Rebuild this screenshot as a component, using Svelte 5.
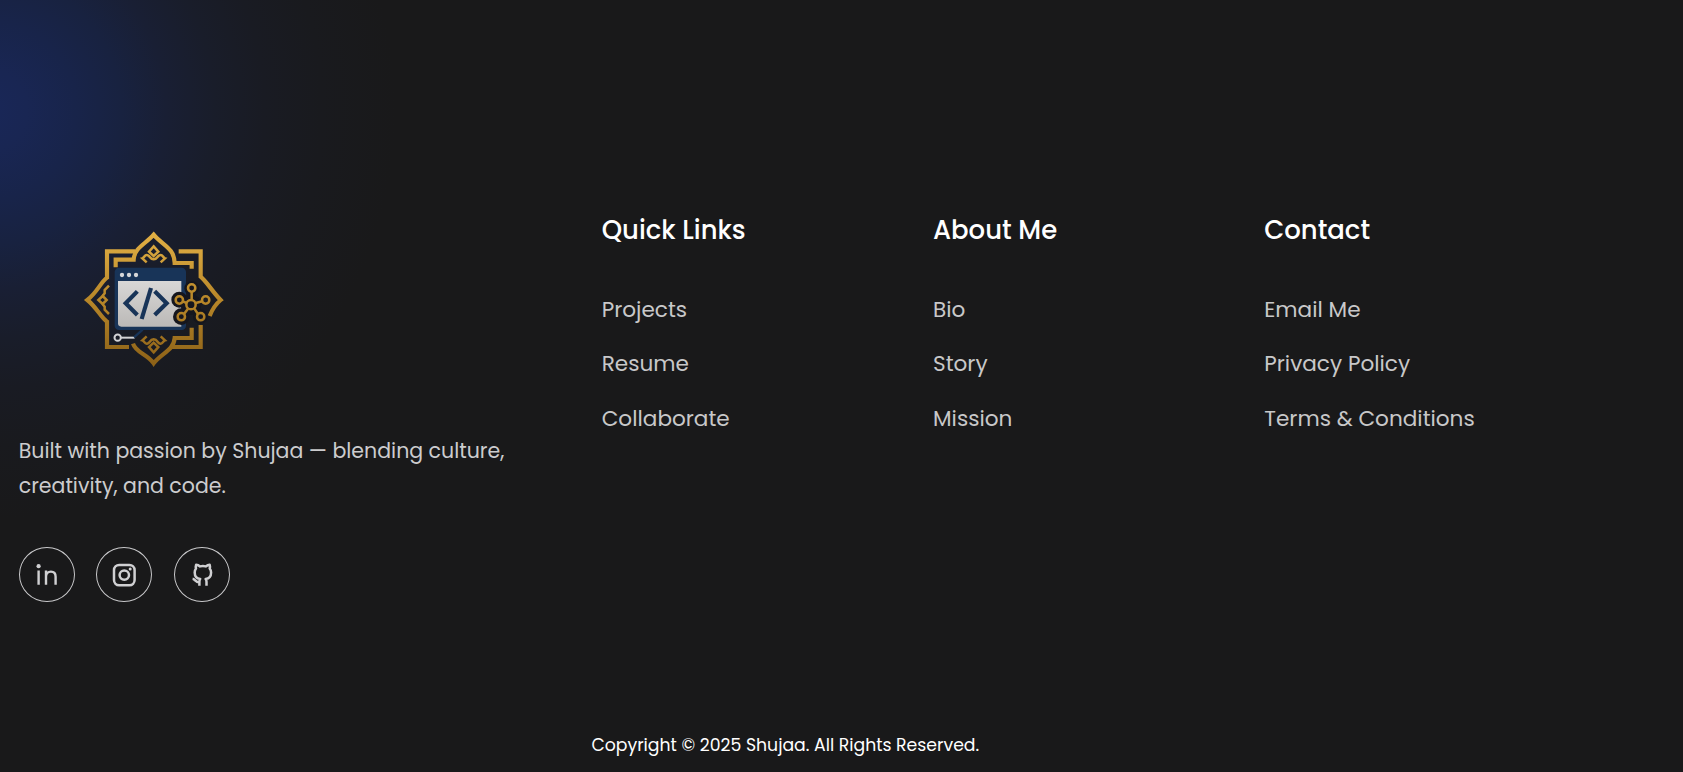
<script>
  const columns = [
    { title: 'Quick Links', links: ['Projects', 'Resume', 'Collaborate'] },
    { title: 'About Me', links: ['Bio', 'Story', 'Mission'] },
    { title: 'Contact', links: ['Email Me', 'Privacy Policy', 'Terms & Conditions'] }
  ];
</script>

<footer class="page">
  <div class="main">
    <section class="brand">
      <svg class="logo" viewBox="0 0 480 480" aria-hidden="true">
        <defs>
          <linearGradient id="gold" gradientUnits="userSpaceOnUse" x1="0" y1="35" x2="0" y2="440">
            <stop offset="0" stop-color="#e2b045" />
            <stop offset="0.5" stop-color="#b88729" />
            <stop offset="1" stop-color="#8b6017" />
          </linearGradient>
          <linearGradient id="paper" x1="0" y1="0" x2="0" y2="1">
            <stop offset="0" stop-color="#d8d7d6" />
            <stop offset="1" stop-color="#bbb9b7" />
          </linearGradient>
        </defs>
        <g fill="none" stroke="url(#gold)" stroke-width="12.5" stroke-linejoin="miter">
          <path d="M122 142 V119 H176 C178 83 211 73 236 44 C261 75 298 83 299 129 H350 V146" />
          <path d="M180 94 H96 V173 C77 187 66 218 37 240 C65 262 77 292 96 305 V381 H162" />
          <path d="M311 94 H377 V170 C397 187 412 215 437 240 C420 254 411 270 404 288" />
          <path d="M377 315 V381 H291" />
          <path d="M174 371 C183 399 216 401 236 430 C259 399 296 392 299 354 H350 V323" />
        </g>
        <g fill="none" stroke="url(#gold)" stroke-width="7.5">
          <path d="M236 79 L250 95 L236 108 L222 95 Z" />
          <path d="M215 127 L202 115 C209 113 208 104 216 105 C226 106 223 117 236 118 C249 117 246 106 256 105 C264 104 263 113 270 115 L257 127" />
          <path d="M236 397 L250 381 L236 368 L222 381 Z" />
          <path d="M215 349 L202 361 C209 363 208 372 216 371 C226 370 223 359 236 358 C249 359 246 370 256 371 C264 372 263 363 270 361 L257 349" />
          <path d="M83 228 L95 240 L83 252 L70 240 Z" />
          <path d="M102 197 L89 210 V220 L82 229 M102 282 L89 269 V260 L82 251" />
        </g>
        <rect x="119" y="143" width="214" height="187" rx="13" fill="#183458" />
        <path d="M129 183 H319 V320 H139 Q129 320 129 310 Z" fill="url(#paper)" />
        <g fill="#d6d7d9">
          <circle cx="141" cy="165" r="6.5" />
          <circle cx="162" cy="165" r="6.5" />
          <circle cx="183" cy="165" r="6.5" />
        </g>
        <g fill="none" stroke="#183458" stroke-width="12.5">
          <path d="M187 214 L152 250 L187 285" />
          <path d="M239 214 L275 250 L239 285" />
          <path d="M228 204 L200 297" />
        </g>
        <g fill="#15161d">
          <circle cx="313" cy="239" r="24" />
          <circle cx="319" cy="290" r="25" />
          <circle cx="348" cy="254" r="31" />
          <circle cx="350" cy="205" r="22" />
          <circle cx="376" cy="290" r="22" />
        </g>
        <g fill="none" stroke="url(#gold)" stroke-width="7.5">
          <circle cx="348" cy="254" r="14" />
          <circle cx="350" cy="204" r="11" />
          <circle cx="313" cy="240" r="11" />
          <circle cx="392" cy="240" r="11" />
          <circle cx="319" cy="290" r="11" />
          <circle cx="377" cy="290" r="11" />
          <path d="M350 215 V240 M323 244 L335 249 M382 244 L362 249 M327 282 L339 266 M369 282 L358 266" />
        </g>
        <circle cx="128" cy="353" r="9.5" fill="none" stroke="#d3d3d5" stroke-width="6" />
        <path d="M138 353 H179" stroke="#d3d3d5" stroke-width="6" />
        <path d="M177 352 L203 329" stroke="#183458" stroke-width="7" />
      </svg>

      <p class="about">Built with passion by Shujaa — blending culture, creativity, and code.</p>

      <div class="social">
        <a href="#linkedin" aria-label="LinkedIn">
          <svg viewBox="0 0 28 28">
            <circle cx="5.6" cy="5.2" r="2.1" fill="currentColor" />
            <path d="M5.6 9.5V23.7M13 23.7V9.5M13 17V15.7C13 12.3 15.2 10.6 17.9 10.6S22.6 12.4 22.6 15.7V23.7" stroke-width="2.4" />
          </svg>
        </a>
        <a href="#instagram" aria-label="Instagram">
          <svg viewBox="0 0 28 28">
            <rect x="4" y="3.9" width="20.6" height="20.4" rx="5.2" stroke-width="2.5" />
            <circle cx="14.3" cy="14.1" r="4.7" stroke-width="2.5" />
            <circle cx="20.2" cy="8.1" r="1.5" fill="currentColor" />
          </svg>
        </a>
        <a href="#github" aria-label="GitHub">
          <svg viewBox="0 0 28 28">
            <path d="M11.4 24.8V20.8C11.4 19.5 11.6 18.7 12.2 18C8.5 17.5 6.7 15.2 6.7 11.5C6.7 9.9 7.1 8.6 8 7.5C7.6 6.3 7.7 5 8.1 3.8C9.8 3.9 11.2 4.7 12.1 5.4C13.9 5 15.9 5 17.7 5.4C18.8 4.6 20.2 3.9 21.7 3.8C22.1 5 22.1 6.3 21.7 7.5C22.6 8.6 23.1 9.9 23.1 11.5C23.1 15.2 21.2 17.5 17.6 18C18.2 18.7 18.5 19.5 18.5 20.8V24.8M11.4 21.2C7.8 21.9 7.6 18.1 4.6 17.7" stroke-width="2.5" />
          </svg>
        </a>
      </div>
    </section>

    {#each columns as { title, links }}
      <nav>
        <h2>{title}</h2>
        <ul>
          {#each links as label}
            <li><a href="#link">{label}</a></li>
          {/each}
        </ul>
      </nav>
    {/each}
  </div>
  <p class="copyright">Copyright © 2025 Shujaa. All Rights Reserved.</p>
</footer>

<style>
  :global(body) {
    margin: 0;
    background: #19191a;
  }
  .page {
    box-sizing: border-box;
    width: 100%;
    height: 772px;
    padding-top: 210px;
    overflow: hidden;
    color: #fff;
    font-family: Poppins, Inter, 'Noto Sans', sans-serif;
    background:
      radial-gradient(
        circle 410px at -14px 110px,
        #192758 0,
        #192653 10%,
        #18244a 22%,
        #182240 33%,
        #191f34 44%,
        #191d2a 56%,
        #191b23 68%,
        #191a1e 82%,
        #19191a 100%
      )
      #19191a;
  }
  .main {
    display: grid;
    grid-template-columns: 583px 331.3px 331.3px 1fr;
    height: 520px;
    padding-left: 18.7px;
  }
  .brand {
    padding-top: 10px;
  }
  .logo {
    display: block;
    width: 160px;
    height: 160px;
    margin-left: 56.3px;
  }
  p,
  h2,
  ul {
    margin: 0;
    padding: 0;
  }
  .about {
    width: 520px;
    margin-top: 53px;
    color: #ccccce;
    font-size: 20.52px;
    line-height: 35px;
  }
  .social {
    display: flex;
    gap: 21.4px;
    margin: 44px 0 0 0.2px;
  }
  .social a {
    display: grid;
    place-items: center;
    box-sizing: border-box;
    width: 56px;
    height: 55px;
    border: 1px solid #c8c8ca;
    border-radius: 50%;
    color: #d0d0d2;
  }
  .social svg {
    width: 28px;
    height: 28px;
    fill: none;
    stroke: currentColor;
    stroke-linejoin: round;
  }
  .social circle[fill] {
    fill: currentColor;
    stroke: none;
  }
  nav {
    white-space: nowrap;
  }
  h2 {
    font-size: 25.92px;
    font-weight: 500;
    line-height: 40px;
  }
  ul {
    margin-top: 32px;
    list-style: none;
  }
  li {
    height: 54.4px;
    font-size: 21.6px;
    line-height: 55px;
  }
  nav a {
    color: #c8c8c9;
    text-decoration: none;
  }
  .copyright {
    padding-left: 591.4px;
    font-size: 17.28px;
    line-height: 30px;
    white-space: nowrap;
  }
</style>
